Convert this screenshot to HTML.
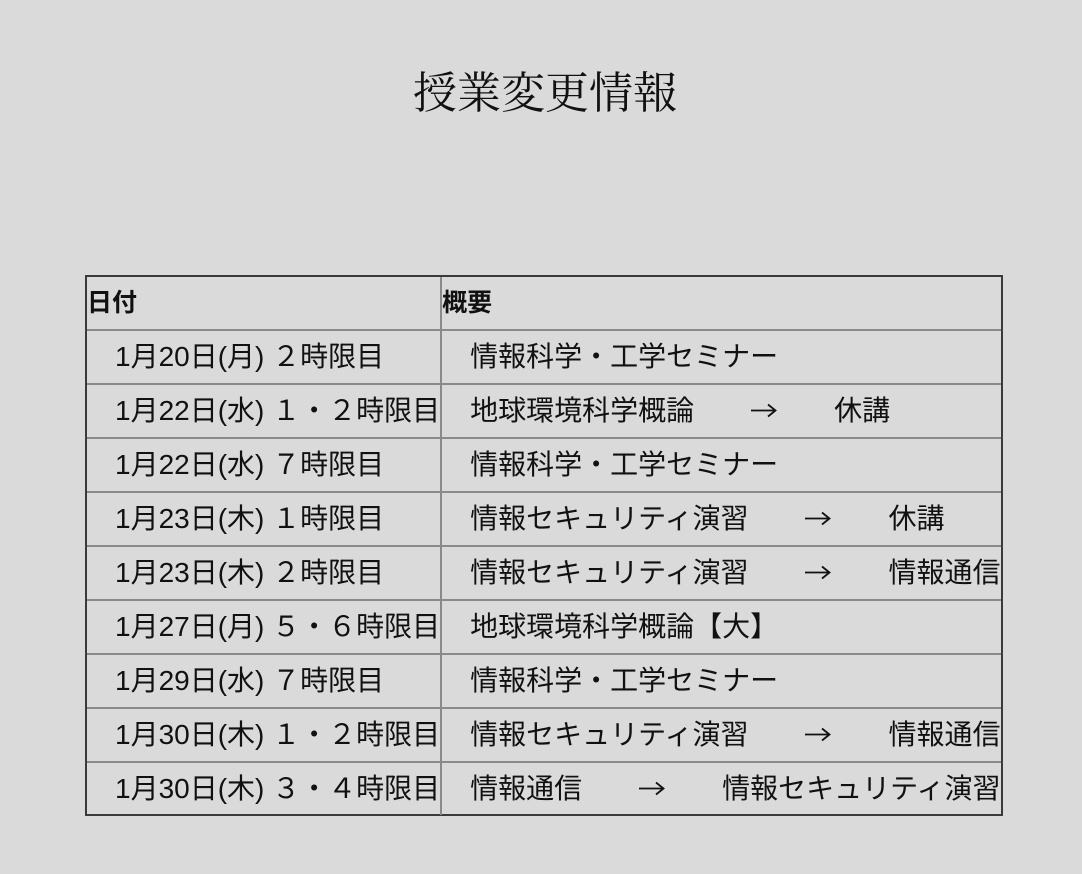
<!DOCTYPE html>
<html><head><meta charset="utf-8"><style>
html,body{margin:0;padding:0;background:#dadada;width:1082px;height:874px;overflow:hidden}
h1{position:absolute;left:0;width:1090px;top:57px;margin:0;text-align:center;font:normal 44px "Noto Serif CJK JP","Noto Serif CJK SC",serif;color:#111}
.wrap{position:absolute;left:85px;top:275px;width:918px;height:541px;border:2px solid #3a3a3a;box-sizing:border-box}
table{width:100%;border-collapse:collapse;border-style:hidden;font-family:"Liberation Sans","Noto Sans CJK JP",sans-serif;font-size:28px;color:#111}
td,th{border:2px solid #8a8a8a;height:52px;padding:0;text-align:left;white-space:pre;vertical-align:middle;line-height:52px}
th{font-weight:bold;font-size:25px}
td:first-child,th:first-child{width:350px}
.a{display:inline-block;width:28px;height:28px;vertical-align:-4px}
</style></head><body>
<h1>授業変更情報</h1>
<svg width="0" height="0" style="position:absolute"><defs><symbol id="ar" viewBox="0 0 28 28"><path d="M1 14.5H25M18 8.5L25.5 14.5L18 20.5" fill="none" stroke="#111" stroke-width="1.8"/></symbol></defs></svg>
<div class="wrap"><table>
<tr><th>日付</th><th>概要</th></tr>
<tr><td>　1月20日(月) ２時限目</td><td>　情報科学・工学セミナー</td></tr>
<tr><td>　1月22日(水) １・２時限目</td><td>　地球環境科学概論　　<svg class="a"><use href="#ar"/></svg>　　休講</td></tr>
<tr><td>　1月22日(水) ７時限目</td><td>　情報科学・工学セミナー</td></tr>
<tr><td>　1月23日(木) １時限目</td><td>　情報セキュリティ演習　　<svg class="a"><use href="#ar"/></svg>　　休講</td></tr>
<tr><td>　1月23日(木) ２時限目</td><td>　情報セキュリティ演習　　<svg class="a"><use href="#ar"/></svg>　　情報通信</td></tr>
<tr><td>　1月27日(月) ５・６時限目</td><td>　地球環境科学概論【大】</td></tr>
<tr><td>　1月29日(水) ７時限目</td><td>　情報科学・工学セミナー</td></tr>
<tr><td>　1月30日(木) １・２時限目</td><td>　情報セキュリティ演習　　<svg class="a"><use href="#ar"/></svg>　　情報通信</td></tr>
<tr><td>　1月30日(木) ３・４時限目</td><td>　情報通信　　<svg class="a"><use href="#ar"/></svg>　　情報セキュリティ演習</td></tr>
</table></div>
</body></html>
